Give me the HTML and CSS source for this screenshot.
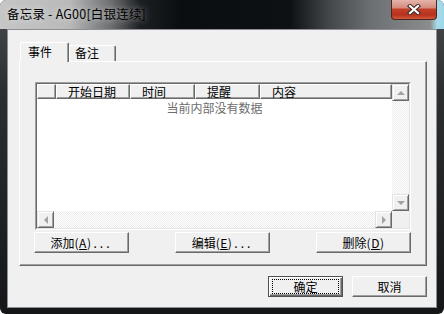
FILE: index.html
```html
<!DOCTYPE html>
<html lang="zh-CN">
<head>
    <meta charset="UTF-8">
    <meta name="viewport" content="width=device-width, initial-scale=1.0">
    <link rel="stylesheet" href="styles.css">
    <title>备忘录</title>
</head>
<body>
    <div class="window">
        <div class="titlebar">
            <span class="title">备忘录 - AG00[白银连续]</span>
            <div class="close">
                <svg width="14" height="11" viewBox="0 0 14 11">
                    <path d="M3 2 L11 9 M11 2 L3 9" stroke="#3a2a28" stroke-width="4.2" stroke-linecap="square"/>
                    <path d="M3 2 L11 9 M11 2 L3 9" stroke="#fff" stroke-width="2.2" stroke-linecap="square"/>
                </svg>
            </div>
        </div>

        <div class="client">
            <div class="tabs">
                <div class="tab active">事件</div>
                <div class="tab">备注</div>
            </div>

            <div class="panel">
                <div class="list">
                    <div class="list-in">
                        <div class="view">
                            <div class="header">
                                <div class="col c1"></div>
                                <div class="col c2">开始日期</div>
                                <div class="col c3">时间</div>
                                <div class="col c4">提醒</div>
                                <div class="col c5">内容</div>
                            </div>
                            <p class="empty">当前内部没有数据</p>
                        </div>
                        <div class="vscroll">
                            <div class="sbtn"><span class="arrow up"></span></div>
                            <div class="track"></div>
                            <div class="sbtn"><span class="arrow down"></span></div>
                        </div>
                        <div class="hscroll">
                            <div class="sbtn"><span class="arrow left"></span></div>
                            <div class="track"></div>
                            <div class="sbtn"><span class="arrow right"></span></div>
                        </div>
                        <div class="corner"></div>
                    </div>
                </div>

                <div class="actions">
                    <button class="btn">添加<span class="paren">(<u>A</u>)</span><span class="dots">...</span></button>
                    <button class="btn">编辑<span class="paren">(<u>E</u>)</span><span class="dots">...</span></button>
                    <button class="btn">删除<span class="paren">(<u>D</u>)</span></button>
                </div>
            </div>

            <div class="footer">
                <button class="btn btn-default"><span class="focus">确定</span></button>
                <button class="btn">取消</button>
            </div>
        </div>
    </div>
</body>
</html>
```

FILE: styles.css
```css
/* dialog frame */
body {
    margin: 0;
    background-color: #fff;
    font-family: "Noto Sans CJK SC", "Liberation Sans", sans-serif;
    font-size: 12px;
}

.window {
    width: 444px;
    height: 314px;
    box-sizing: border-box;
    padding-bottom: 6px;
    border-radius: 6px;
    overflow: hidden;
    display: flex;
    flex-direction: column;
    background: linear-gradient(180deg, #4a4d50 0, #2c2f32 90px, #141618 100%);
}

.titlebar {
    height: 29px;
    flex-shrink: 0;
    display: flex;
    justify-content: space-between;
    align-items: flex-start;
    background: linear-gradient(90deg, #c6c6c6 0, #b9b9b9 70px, #6a6c6e 112px, #1d2023 140px, #0b0e11 180px, #0e1114 290px, #45484b 330px, #6c6f72 370px, #8a8c8e 430px, #a6dbea 437px, #9fd6e8 444px);
}

.title {
    margin: 6px 0 0 7px;
    line-height: 16px;
    font-size: 12.5px;
    color: #000;
    letter-spacing: 0.2px;
    text-shadow: 0 0 6px rgba(255, 255, 255, 0.7);
}

.close {
    width: 46px;
    height: 20px;
    margin-right: 7px;
    box-sizing: border-box;
    border: 1px solid #4e2620;
    border-top: none;
    border-radius: 0 0 4px 4px;
    display: flex;
    align-items: center;
    justify-content: center;
    background: linear-gradient(180deg, #e6b4aa 0, #d58a7c 8px, #c2402a 9px, #b8321e 15px, #d2583c 100%);
}

.client {
    flex: 1;
    margin: 0 7px;
    padding: 12px 0 10px 11px;
    border: 1px solid #8c9096;
    background-color: #f0f0f0;
    display: flex;
    flex-direction: column;
}

/* tabs */
.tabs {
    height: 19px;
    display: flex;
    align-items: flex-end;
    padding-left: 1px;
}

.tab {
    box-sizing: border-box;
    height: 16px;
    width: 47px;
    padding-left: 5px;
    line-height: 14px;
    background-color: #f0f0f0;
    border: 1px solid #fff;
    border-bottom: none;
    border-right: 1px solid #696969;
    box-shadow: inset -1px 0 #a0a0a0;
    border-radius: 2px 2px 0 0;
    color: #000;
}

.tab.active {
    position: relative;
    z-index: 1;
    height: 20px;
    width: 49px;
    margin-bottom: -1px;
    padding: 2px 0 0 7px;
}

.panel {
    width: 408px;
    height: 205px;
    box-sizing: border-box;
    padding: 20px 0 0 15px;
    border: 1px solid;
    border-color: #fff #696969 #696969 #fff;
    box-shadow: inset -1px -1px #a0a0a0;
}

/* list view */
.list {
    width: 376px;
    height: 148px;
    box-sizing: border-box;
    border: 1px solid;
    border-color: #a0a0a0 #fff #fff #a0a0a0;
}

.list-in {
    height: 100%;
    box-sizing: border-box;
    border: 1px solid;
    border-color: #696969 #e3e3e3 #e3e3e3 #696969;
    display: grid;
    grid-template-columns: 1fr 17px;
    grid-template-rows: 1fr 17px;
}

.view {
    background-color: #fff;
    overflow: hidden;
}

.header {
    display: flex;
    height: 15px;
}

.col {
    box-sizing: border-box;
    height: 15px;
    padding-left: 11px;
    line-height: 13px;
    background-color: #f0f0f0;
    border: 1px solid;
    border-color: #fff #696969 #696969 #fff;
    box-shadow: inset -1px -1px #a0a0a0;
    white-space: nowrap;
}

.c1 { width: 19px; }
.c2 { width: 74px; }
.c3 { width: 65px; }
.c4 { width: 65px; }
.c5 { flex: 1; }

.empty {
    margin: 2px 0 0;
    text-align: center;
    line-height: 14px;
    color: #6d6d6d;
}

.vscroll,
.hscroll {
    display: flex;
    background: repeating-conic-gradient(#fff 0 25%, #ececec 0 50%) 0 0 / 2px 2px;
}

.vscroll {
    flex-direction: column;
}

.track {
    flex: 1;
}

.sbtn {
    width: 17px;
    height: 17px;
    box-sizing: border-box;
    border: 1px solid;
    border-color: #e3e3e3 #696969 #696969 #e3e3e3;
    box-shadow: inset 1px 1px #fff, inset -1px -1px #a0a0a0;
    background-color: #f0f0f0;
    display: flex;
    align-items: center;
    justify-content: center;
}

.arrow {
    width: 0;
    height: 0;
    border: 4px solid transparent;
}

.arrow.up { border-bottom-color: #a3a3a3; border-top-width: 0; }
.arrow.down { border-top-color: #a3a3a3; border-bottom-width: 0; }
.arrow.left { border-right-color: #a3a3a3; border-left-width: 0; }
.arrow.right { border-left-color: #a3a3a3; border-right-width: 0; }

.corner {
    background-color: #f0f0f0;
}

/* buttons */
.actions {
    width: 377px;
    margin: 2px 0 0 -1px;
    display: flex;
    justify-content: space-between;
}

.btn {
    width: 95px;
    height: 21px;
    box-sizing: border-box;
    padding: 0;
    font-family: inherit;
    font-size: 12px;
    line-height: 14px;
    color: #000;
    background-color: #f0f0f0;
    border: 1px solid;
    border-color: #fff #696969 #696969 #fff;
    box-shadow: inset -1px -1px #a0a0a0;
    display: flex;
    align-items: center;
    justify-content: center;
}

.paren {
    letter-spacing: 0.5px;
}

.dots {
    letter-spacing: 3px;
    margin-left: 2px;
}

.footer {
    width: 408px;
    margin-top: 10px;
    display: flex;
    justify-content: flex-end;
    gap: 9px;
}

.footer .btn {
    width: 75px;
}

.btn-default {
    border: 1px solid #505050;
    box-shadow: inset 1px 1px #fff, inset -1px -1px #696969, inset -2px -2px #a0a0a0;
}

.focus {
    width: 65px;
    height: 13px;
    line-height: 13px;
    border: 1px dotted #000;
    text-align: center;
}
```
